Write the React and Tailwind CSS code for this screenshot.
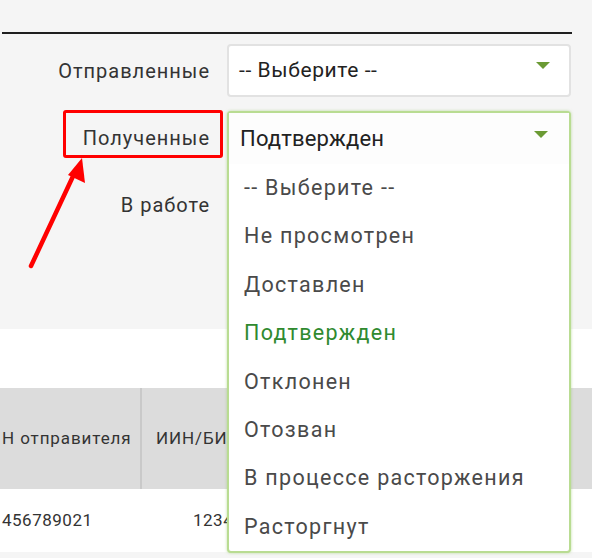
import React from 'react'

const options = [
  '-- Выберите --',
  'Не просмотрен',
  'Доставлен',
  'Подтвержден',
  'Отклонен',
  'Отозван',
  'В процессе расторжения',
  'Расторгнут',
]

function Caret() {
  return (
    <svg className="absolute right-[21px] top-[18px]" width="14" height="8" viewBox="0 0 14 8">
      <path d="M0 0 H14 L7 7 Z" fill="#6b9a34" />
    </svg>
  )
}

function FormRow({ label, children }) {
  return (
    <div className="flex items-center h-[53px]">
      <div className="w-[210px] text-right text-[20px] tracking-[1px] text-[#333]">{label}</div>
      <div className="ml-[17px] w-[344px] h-full relative">{children}</div>
    </div>
  )
}

export default function App() {
  const selected = 'Подтвержден'

  return (
    <div className="relative w-[592px] h-[558px] overflow-hidden bg-[#f5f5f5]" style={{ fontFamily: 'Roboto, "Noto Sans", sans-serif' }}>
      {/* filter panel */}
      <div className="h-[329px] pt-[32px]">
        <div className="ml-[2px] w-[570px] h-[2px] bg-[#1f1f1f]"></div>

        <div className="mt-[10px] flex flex-col gap-[14px]">
          <FormRow label="Отправленные">
            <div className="h-full bg-white border-2 border-[#e2e2e2] rounded-[4px] flex items-center pl-[10px] text-[21px] tracking-[0.6px] text-[#222]">
              -- Выберите --
              <Caret />
            </div>
          </FormRow>

          <FormRow label="Полученные">
            {/* open dropdown */}
            <div className="absolute left-0 top-0 w-[344px] z-20 bg-white border-2 border-[#b9dc92] rounded-[4px] shadow-[0_0_3px_rgba(150,200,100,0.6)]">
              <div className="relative h-[51px] flex items-center pl-[11px] text-[22px] tracking-[0.2px] text-[#222] bg-[#fdfdfd]">
                {selected}
                <Caret />
              </div>
              <ul>
                {options.map((o) => (
                  <li
                    key={o}
                    className={`h-[48.4px] flex items-center pl-[15px] text-[21.5px] tracking-[1.3px] ${o === selected ? 'text-[#2f8a2f]' : 'text-[#4a4a4a]'}`}
                  >
                    {o}
                  </li>
                ))}
              </ul>
            </div>
          </FormRow>

          <FormRow label="В работе">
            <div className="h-full bg-white border-2 border-[#e2e2e2] rounded-[4px]"></div>
          </FormRow>
        </div>
      </div>

      {/* results */}
      <div className="h-[59px] bg-white"></div>
      <div className="flex h-[101px] bg-[#dcdcdc] text-[17px] tracking-[0.9px] text-[#333]">
        <div className="w-[142px] flex items-center pl-[2px] border-r-2 border-[#c9c9c9] whitespace-nowrap overflow-hidden">Н отправителя</div>
        <div className="w-[85px] flex items-center pl-[14px] whitespace-nowrap overflow-hidden">ИИН/БИН</div>
      </div>
      <div className="flex h-[63px] bg-white text-[17px] tracking-[0.5px] text-[#333]">
        <div className="w-[144px] flex items-center pl-[2px]">456789021</div>
        <div className="w-[83px] flex items-center pl-[49px] whitespace-nowrap overflow-hidden">1234</div>
      </div>

      {/* annotation */}
      <div className="absolute left-[63px] top-[110px] w-[160px] h-[48px] border-[3px] border-[#ff0000] rounded-[3px] pointer-events-none"></div>
      <svg className="absolute left-0 top-0 pointer-events-none" width="592" height="558">
        <line x1="31" y1="266" x2="75" y2="172" stroke="#ff0000" strokeWidth="4.5" strokeLinecap="round" />
        <path d="M82 158 L85 183 L68 175 Z" fill="#ff0000" />
      </svg>
    </div>
  )
}
